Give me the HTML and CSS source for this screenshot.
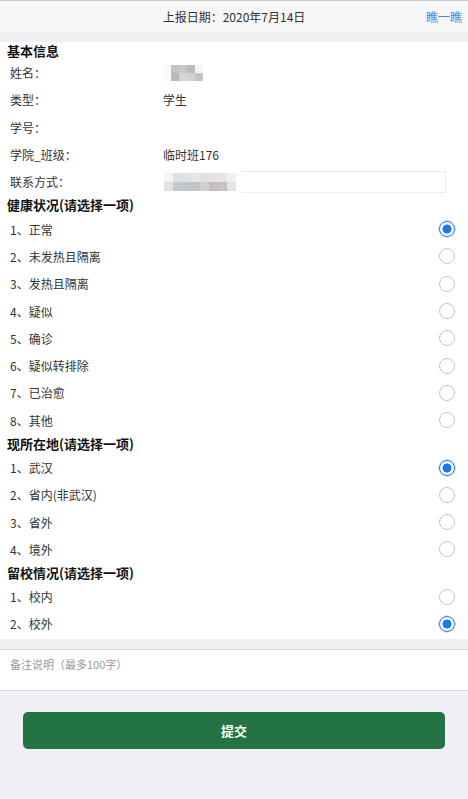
FILE: index.html
```html
<!DOCTYPE html>
<html lang="zh-CN">
<head>
<meta charset="UTF-8">
<meta name="viewport" content="width=device-width, initial-scale=1.0">
<title>健康上报</title>
<link rel="stylesheet" href="styles.css">
</head>
<body>
<div class="header">
    <span class="date">上报日期：2020年7月14日</span>
    <a class="look" href="#">瞧一瞧</a>
</div>
<div class="gap"></div>
<form class="panel" id="reportForm">
    <div class="title first">基本信息</div>
    <div class="info-row">
        <span class="info-label">姓名：</span>
        <span class="info-value">
            <span class="mosaic">
                <i style="background:#fbfaf8"></i><i style="background:#c3c3c3"></i><i style="background:#c9c9c9"></i><i style="background:#b8bbbf"></i><i style="background:#f3f4f4"></i>
                <i style="background:#fcfbf8"></i><i style="background:#b9b9b9"></i><i style="background:#d6d3d3"></i><i style="background:#d3d1d1"></i><i style="background:#bfc7c6"></i>
            </span>
        </span>
    </div>
    <div class="info-row">
        <span class="info-label">类型：</span>
        <span class="info-value">学生</span>
    </div>
    <div class="info-row">
        <span class="info-label">学号：</span>
        <span class="info-value"></span>
    </div>
    <div class="info-row">
        <span class="info-label">学院_班级：</span>
        <span class="info-value">临时班176</span>
    </div>
    <div class="info-row">
        <span class="info-label">联系方式：</span>
        <span class="info-value">
            <span class="phone-box">
                <span class="mosaic wide">
                    <i style="background:#f4f4f4"></i><i style="background:#e1e1e3"></i><i style="background:#e2e2e4"></i><i style="background:#e6e6e6"></i><i style="background:#e1e1e4"></i><i style="background:#e4e4e6"></i><i style="background:#e6e6e8"></i><i style="background:#f0f0f0"></i>
                    <i style="background:#dde3e4"></i><i style="background:#c9c9cb"></i><i style="background:#bfc8d0"></i><i style="background:#c3c3c3"></i><i style="background:#d0d0d4"></i><i style="background:#c9bcc0"></i><i style="background:#c4c4c4"></i><i style="background:#e4e4e4"></i>
                </span>
            </span>
        </span>
    </div>

    <div class="title">健康状况(请选择一项)</div>
    <label class="option"><span>1、正常</span><input type="radio" name="health" checked><span class="radio"></span></label>
    <label class="option"><span>2、未发热且隔离</span><input type="radio" name="health"><span class="radio"></span></label>
    <label class="option"><span>3、发热且隔离</span><input type="radio" name="health"><span class="radio"></span></label>
    <label class="option"><span>4、疑似</span><input type="radio" name="health"><span class="radio"></span></label>
    <label class="option"><span>5、确诊</span><input type="radio" name="health"><span class="radio"></span></label>
    <label class="option"><span>6、疑似转排除</span><input type="radio" name="health"><span class="radio"></span></label>
    <label class="option"><span>7、已治愈</span><input type="radio" name="health"><span class="radio"></span></label>
    <label class="option"><span>8、其他</span><input type="radio" name="health"><span class="radio"></span></label>

    <div class="title">现所在地(请选择一项)</div>
    <label class="option"><span>1、武汉</span><input type="radio" name="place" checked><span class="radio"></span></label>
    <label class="option"><span>2、省内(非武汉)</span><input type="radio" name="place"><span class="radio"></span></label>
    <label class="option"><span>3、省外</span><input type="radio" name="place"><span class="radio"></span></label>
    <label class="option"><span>4、境外</span><input type="radio" name="place"><span class="radio"></span></label>

    <div class="title">留校情况(请选择一项)</div>
    <label class="option"><span>1、校内</span><input type="radio" name="school"><span class="radio"></span></label>
    <label class="option"><span>2、校外</span><input type="radio" name="school" checked><span class="radio"></span></label>
</form>
<div class="gap"></div>
<div class="remark">
    <textarea placeholder="备注说明（最多100字）" maxlength="100"></textarea>
</div>
<div class="actions">
    <button type="submit" form="reportForm">提交</button>
</div>
</body>
</html>
```

FILE: styles.css
```css
body {
    margin: 0;
    background-color: #efeff4;
    font-family: "Noto Sans CJK SC", "Noto Sans", sans-serif;
    font-size: 12px;
    color: #333;
}
.header {
    position: relative;
    height: 31px;
    border-top: 1px solid #c9c9c9;
    background-color: #f7f7f7;
    display: flex;
    align-items: center;
    justify-content: center;
}
.date {
    font-size: 12px;
    color: #333;
}
.look {
    position: absolute;
    right: 6px;
    top: 7px;
    color: #3b8ce8;
    font-size: 12px;
    text-decoration: none;
}
.gap {
    height: 10px;
}
.panel {
    margin: 0;
    background-color: #fff;
    padding-bottom: 1px;
}
.title {
    height: 20px;
    line-height: 20px;
    padding-left: 7px;
    font-size: 13px;
    font-weight: bold;
    color: #111;
}
.title.first {
    height: 17px;
    line-height: 17px;
}
.info-row {
    display: flex;
    align-items: center;
    height: 27.3px;
}
.info-label {
    width: 153px;
    padding-left: 10px;
}
.info-value {
    flex: 1;
    display: flex;
    align-items: center;
    padding-right: 22px;
}
.mosaic {
    display: grid;
    grid-template-columns: repeat(5, 8px);
    grid-auto-rows: 8px;
    margin-top: 0;
}
.mosaic.wide {
    grid-template-columns: repeat(8, 9px);
    grid-auto-rows: 9px;
    box-shadow: 0 0 6px 6px #fff;
    background-color: #fff;
}
.mosaic i {
    display: block;
}
.phone-box {
    flex: 1;
    height: 20px;
    display: flex;
    align-items: center;
    border: 1px solid #ececec;
}
.option {
    display: flex;
    align-items: center;
    justify-content: space-between;
    height: 27.3px;
    padding-left: 10px;
    padding-right: 13px;
    cursor: pointer;
}
.option input {
    display: none;
}
.radio {
    width: 14px;
    height: 14px;
    border: 1.5px solid #c6c6c6;
    border-radius: 50%;
    box-sizing: content-box;
}
.option input:checked + .radio {
    border: 1.5px solid #1f7cf6;
    background: radial-gradient(circle, #1a78f2 0 4.2px, #fff 4.8px);
    box-shadow: 0 0 0 1px #cfe2fd;
}
.remark {
    background-color: #fff;
    border-top: 1px solid #d9d9d9;
    border-bottom: 1px solid #d9d9d9;
    height: 40px;
}
.remark textarea {
    display: block;
    width: 100%;
    height: 100%;
    box-sizing: border-box;
    border: none;
    outline: none;
    resize: none;
    padding: 6px 10px;
    font-family: inherit;
    font-size: 11px;
    color: #333;
}
.remark textarea::placeholder {
    color: #999;
}
.actions {
    padding: 21px 23px;
}
.actions button {
    display: block;
    width: 100%;
    height: 37px;
    border: none;
    border-radius: 5px;
    background-color: #247345;
    color: #fff;
    font-family: inherit;
    font-size: 13px;
    font-weight: bold;
    cursor: pointer;
}
```
